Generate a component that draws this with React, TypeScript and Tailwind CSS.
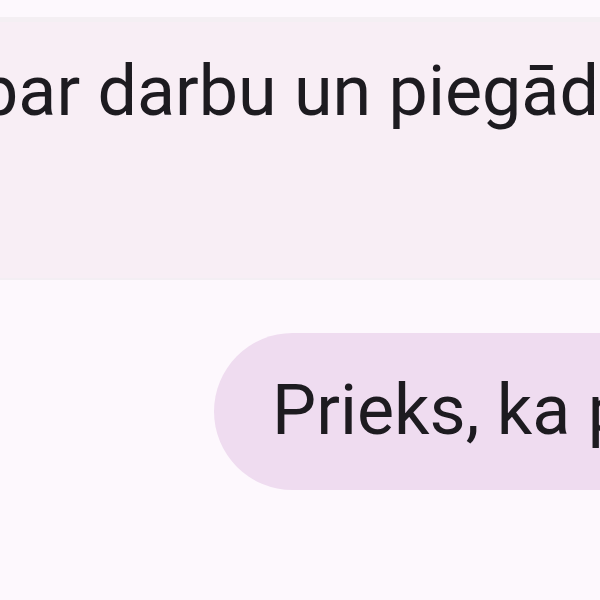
export default function App() {
  return (
    <div
      className="w-[600px] h-[600px] overflow-hidden bg-[#fdf8fd] flex flex-col"
      style={{ fontFamily: 'Roboto, "Noto Sans", sans-serif' }}
    >
      <div className="h-[17px] shrink-0 bg-[#fdf8fd]" />
      <div className="h-[5px] shrink-0 bg-[#f4eff3]" />
      <div className="h-[256px] shrink-0 bg-[#f8eef5] pt-[34px] overflow-hidden">
        <div className="ml-[-21px] whitespace-nowrap text-[70px] leading-none text-[#1d1b20]">
          par darbu un piegādi
        </div>
      </div>
      <div className="h-[2px] shrink-0 bg-[#f3eef3]" />
      <div className="flex justify-end pt-[53px]">
        <div className="ml-[214px] flex-1 h-[157px] rounded-l-[80px] bg-[#efdcf0] pt-[42px] pl-[58px] overflow-hidden">
          <div className="whitespace-nowrap text-[70px] leading-none text-[#1d1b20]">
            Prieks, ka palīdzēja
          </div>
        </div>
      </div>
    </div>
  );
}
